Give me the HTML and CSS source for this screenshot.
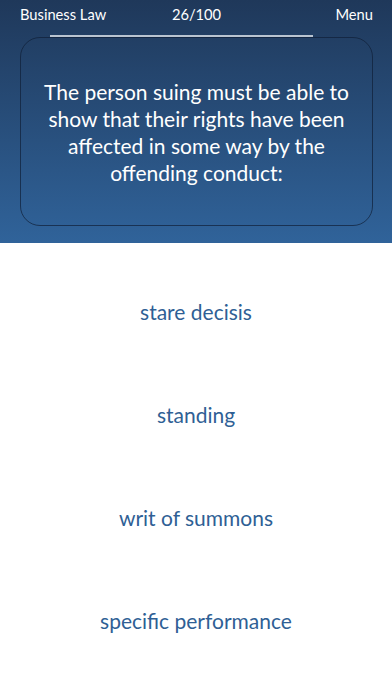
FILE: index.html
```
<!DOCTYPE html>
<html>
<head>
<meta charset="utf-8">
<link rel="stylesheet" href="styles.css">
</head>
<body>
<div class="top">
  <div class="bar">
    <span class="left">Business Law</span>
    <span class="mid">26/100</span>
    <span class="right">Menu</span>
  </div>
  <div class="rule"></div>
  <div class="card">
    <p class="question">The person suing must be able to show that their rights have been affected in some way by the offending conduct:</p>
  </div>
</div>
<div class="answers">
  <div class="answer">stare decisis</div>
  <div class="answer">standing</div>
  <div class="answer">writ of summons</div>
  <div class="answer">specific performance</div>
</div>
</body>
</html>
```
FILE: styles.css
```
html, body {
  margin: 0;
  padding: 0;
  background: #ffffff;
  font-family: Lato, "Open Sans", sans-serif;
}
.top {
  height: 243px;
  box-sizing: border-box;
  padding: 0 19px 0 20px;
  background: linear-gradient(#1f385a, #30639a);
  color: #ffffff;
}
.bar {
  height: 28px;
  display: grid;
  grid-template-columns: 1fr auto 1fr;
  align-items: center;
  font-size: 14.7px;
}
.left { justify-self: start; }
.mid { justify-self: center; }
.right { justify-self: end; }
.rule {
  margin: 7px 0 0 30px;
  width: 263px;
  height: 2px;
  background: #b9c4d1;
}
.card {
  height: 189px;
  box-sizing: border-box;
  border: 1px solid rgba(16, 32, 56, 0.7);
  border-radius: 20px;
  display: flex;
  align-items: center;
  justify-content: center;
  padding: 0 16px;
}
.question {
  margin: 0;
  text-align: center;
  font-size: 21px;
  line-height: 27px;
}
.answers {
  padding-top: 17px;
}
.answer {
  height: 103px;
  display: flex;
  align-items: center;
  justify-content: center;
  font-size: 21px;
  color: #2f5f95;
}
```
